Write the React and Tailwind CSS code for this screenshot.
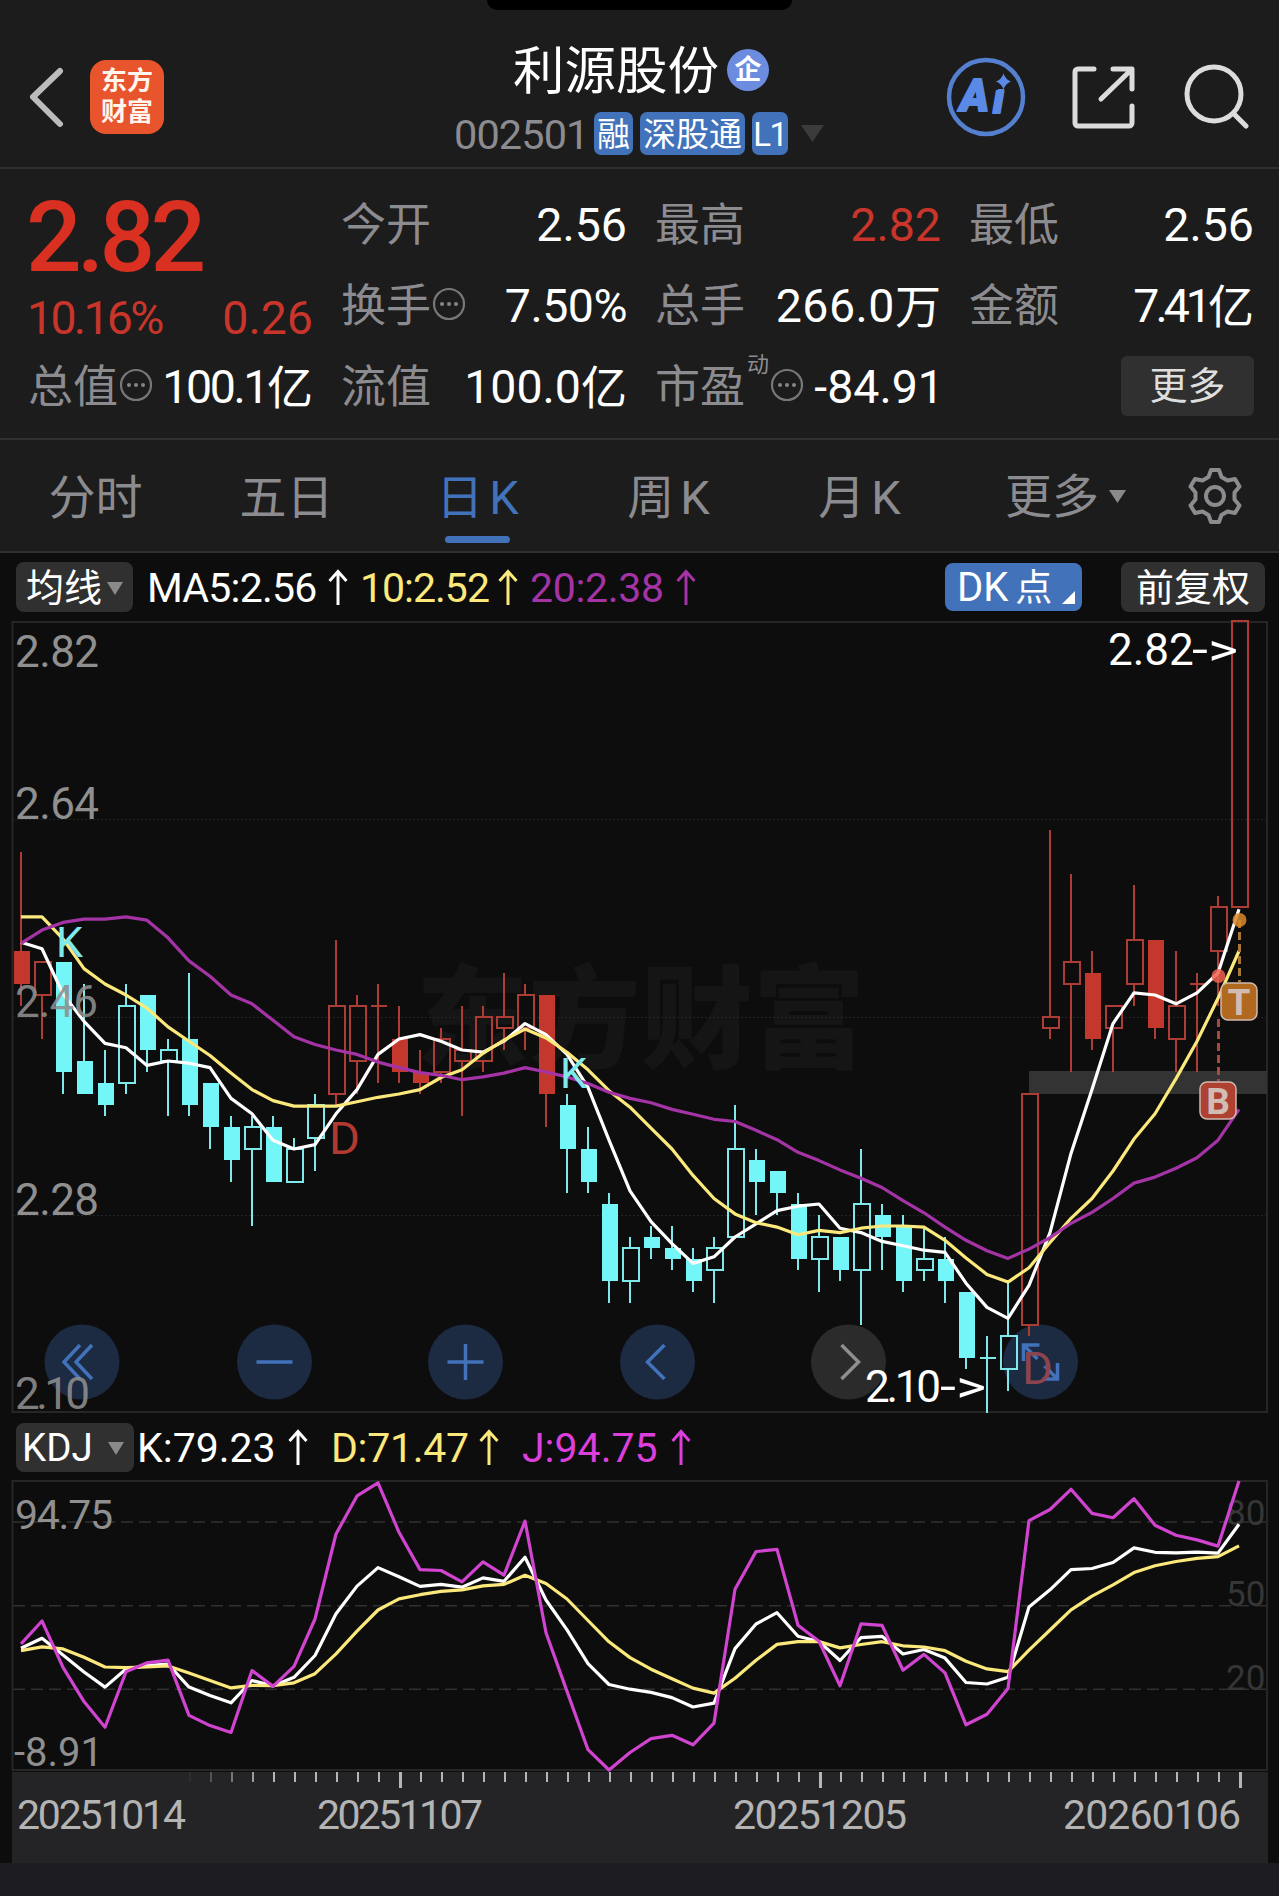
import React from 'react';

// prices in cents: [style, high, bodyTop, bodyBottom, low]
// style: r/c = red/cyan, f/h/d = filled/hollow/doji
const CANDLES = [
  ['rf', 261, 252, 249, 247], ['rh', 251, 251, 248, 244], ['cf', 251, 251, 241, 239], ['cf', 249, 242, 239, 239],
  ['cf', 243, 240, 238, 237], ['ch', 249, 247, 240, 239], ['cf', 248, 248, 243, 241], ['ch', 244, 243, 242, 237],
  ['cf', 250, 244, 238, 237], ['cf', 240, 240, 236, 234], ['cf', 237, 236, 233, 231], ['ch', 237, 236, 234, 227],
  ['cf', 237, 236, 231, 231], ['ch', 235, 234, 231, 231], ['ch', 239, 238, 235, 232], ['rh', 253, 247, 239, 238],
  ['rh', 248, 247, 242, 239], ['rd', 249, 247, 247, 240], ['rf', 247, 244, 241, 240], ['rf', 243, 241, 240, 239],
  ['rh', 245, 244, 241, 240], ['rh', 247, 243, 242, 237], ['rh', 247, 246, 242, 241], ['rh', 250, 246, 245, 243],
  ['rh', 249, 248, 245, 243], ['rf', 248, 248, 239, 236], ['cf', 239, 238, 234, 230], ['cf', 236, 234, 231, 230],
  ['cf', 230, 229, 222, 220], ['ch', 226, 225, 222, 220], ['cf', 227, 226, 225, 224], ['cf', 227, 225, 224, 223],
  ['cf', 225, 224, 222, 221], ['ch', 226, 225, 223, 220], ['ch', 238, 234, 226, 226], ['cf', 234, 233, 231, 228],
  ['cf', 232, 232, 230, 228], ['cf', 230, 229, 224, 223], ['ch', 228, 226, 224, 221], ['cf', 226, 226, 223, 222],
  ['ch', 234, 229, 223, 218], ['cf', 229, 228, 226, 223], ['cf', 228, 227, 222, 221], ['ch', 227, 224, 223, 222],
  ['cf', 226, 224, 222, 220], ['cf', 221, 221, 215, 214], ['cd', 217, 215, 215, 210], ['ch', 222, 217, 214, 212],
  ['rh', 239, 239, 218, 217], ['rh', 263, 246, 245, 244], ['rh', 259, 251, 249, 241], ['rf', 252, 250, 244, 243],
  ['rh', 247, 247, 245, 241], ['rh', 258, 253, 249, 247], ['rf', 253, 253, 245, 244], ['rh', 252, 247, 244, 241],
  ['rd', 250, 249, 249, 241], ['rh', 257, 256, 252, 247], ['rh', 282, 282, 256, 256],
];

const closes = CANDLES.map(([s, , top, bottom]) => (s[1] === 'f' ? bottom : top));

// the first values of each line depend on days left of the visible window
const MA5_HEAD = [252.8, 252.2, 248.1, 245.6];
const MA10_HEAD = [255.1, 255.1, 253.1, 250.4, 249, 248, 246.8, 245.1, 243.8];
const MA20_HEAD = [252.7, 253.9, 254.6, 254.9, 254.9, 255.1, 254.8, 253.2, 251.1, 249.7, 248, 247.2, 245.7, 244.2, 243.5, 243, 242.6, 241.9, 241.4];
const K_HEAD = [34.7, 38.3, 32.3, 26.2, 20.8, 27.3, 28.5, 29.1];
const D_HEAD = [33.9, 35.2, 34.5, 31.5, 28, 27.8, 28, 28.4];

function movingAverage(n, head) {
  return closes.map((_, i) => (i < head.length ? head[i] : closes.slice(i - n + 1, i + 1).reduce((a, b) => a + b, 0) / n));
}

function kdj() {
  const k = [...K_HEAD];
  const d = [...D_HEAD];
  for (let i = k.length; i < CANDLES.length; i++) {
    const win = CANDLES.slice(i - 8, i + 1);
    const hi = Math.max(...win.map((c) => c[1]));
    const lo = Math.min(...win.map((c) => c[4]));
    const rsv = ((closes[i] - lo) / (hi - lo)) * 100;
    k.push((k[i - 1] * 2 + rsv) / 3);
    d.push((d[i - 1] * 2 + k[i]) / 3);
  }
  return { k, d, j: k.map((v, i) => 3 * v - 2 * d[i]) };
}

const px = (i) => 21 + i * 21;
const py = (c) => 396 + (246 - c) * 11;
const ky = (v) => 41 + (80 - v) * 2.789;
const line = (values, y) => values.map((v, i) => `${px(i)},${y(v).toFixed(1)}`).join(' ');

const RED = '#c4372c';
const RED_LINE = '#ab3d35';
const CYAN = '#74f5f7';
const CYAN_LINE = '#7fe8ea';

function Candle({ data, i }) {
  const [style, high, top, bottom, low] = data;
  const red = style[0] === 'r';
  const stroke = red ? RED_LINE : CYAN_LINE;
  const x = px(i);
  if (style[1] === 'd') {
    return (
      <g fill={stroke}>
        <rect x={x - 1} y={py(high)} width="2" height={py(low) - py(high)} />
        <rect x={x - 7} y={py(top) - 1} width="16" height="2" />
      </g>
    );
  }
  return (
    <g>
      <rect x={x - 1} y={py(high)} width="2" height={py(top) - py(high)} fill={stroke} />
      <rect x={x - 1} y={py(bottom)} width="2" height={py(low) - py(bottom)} fill={stroke} />
      {style[1] === 'f'
        ? <rect x={x - 7} y={py(top)} width="16" height={py(bottom) - py(top)} fill={red ? RED : CYAN} />
        : <rect x={x - 7} y={py(top)} width="16" height={py(bottom) - py(top)} fill="none" stroke={stroke} strokeWidth="2" />}
    </g>
  );
}

function Down({ w = 16, h = 13, color = '#8a8a8a' }) {
  return <svg width={w} height={h} viewBox="0 0 16 13" preserveAspectRatio="none"><path d="M0 0h16L8 13z" fill={color} /></svg>;
}

function Up({ className = '' }) {
  return (
    <svg width="20" height="36" viewBox="0 0 20 36" fill="none" stroke="currentColor" strokeWidth="3" className={`shrink-0 ${className}`}>
      <path d="M10 36V3M1.500 12 10 2.500l8.500 9.500" />
    </svg>
  );
}

function Info({ className = '' }) {
  return (
    <svg width="34" height="34" viewBox="0 0 34 34" className={`shrink-0 ${className}`}>
      <circle cx="17" cy="17" r="15" fill="none" stroke="#77777a" strokeWidth="2.200" />
      <g fill="#85858a"><circle cx="10" cy="17" r="2" /><circle cx="17" cy="17" r="2" /><circle cx="24" cy="17" r="2" /></g>
    </svg>
  );
}

function Stat({ label, value, unit, info, sup, className = 'text-white' }) {
  return (
    <div className="flex h-[81px] items-center whitespace-nowrap pt-[2px]">
      <span className="text-[45px] text-[#8c8c90]">{label}</span>
      {sup && <span className="mb-[46px] ml-[2px] text-[22px] text-[#8c8c90]">{sup}</span>}
      {info && <Info className="mb-[6px] ml-px" />}
      <span className={`ml-auto text-[46.500px] ${className}`}>{value}</span>
      {unit && <span className="text-[46px] text-white">{unit}</span>}
    </div>
  );
}

function Header() {
  return (
    <header className="relative flex h-[169px] justify-between border-b-2 border-[#303030]">
      <div className="absolute left-[487px] top-0 h-[10px] w-[305px] rounded-b-[32px] bg-black" />
      <div className="mt-[60px] flex h-[74px] items-center pl-[29px]">
        <svg width="35" height="62" viewBox="0 0 35 62" fill="none" stroke="#bcbcbc" strokeWidth="6" strokeLinecap="round" strokeLinejoin="round">
          <path d="M31 5 4 31l27 27" />
        </svg>
        <div className="ml-[26px] flex h-[74px] w-[74px] flex-col items-center justify-center rounded-[16px] bg-[#e8552c] pb-px text-[26px] font-bold leading-[31px] text-[#fff6ee]">
          <span>东方</span>
          <span>财富</span>
        </div>
      </div>
      <div className="absolute left-[454px] top-[38px] flex w-[372px] flex-col">
        <div className="flex h-[64px] items-center pl-[59px]">
          <h1 className="pt-[4px] text-[51.500px] leading-none text-white">利源股份</h1>
          <span className="ml-[8px] flex h-[42px] w-[42px] items-center justify-center rounded-full bg-[#6c8ce0] text-[27px] font-bold leading-none text-white">企</span>
        </div>
        <div className="mt-[10px] flex h-[43px] items-center whitespace-nowrap text-[33px] leading-none text-white">
          <span className="w-[140px] pt-[3px] text-[41.500px] tracking-[-0.900px] text-[#8c8c90]">002501</span>
          <span className="flex h-[43px] w-[39px] items-center justify-center rounded-[7px] bg-[#4172ba] pt-[2px]">融</span>
          <span className="ml-[7px] flex h-[43px] w-[105px] items-center justify-center rounded-[7px] bg-[#4172ba] pt-[2px]">深股通</span>
          <span className="ml-[7px] flex h-[43px] w-[36px] items-center justify-center rounded-[7px] bg-[#4172ba] pt-[2px] tracking-[-1.500px]">L1</span>
          <span className="ml-[13px]"><Down w={23} h={17} color="#3b3b3b" /></span>
        </div>
      </div>
      <div className="mt-[56px] flex h-[82px] items-center pr-[30px]">
        <svg width="82" height="82" viewBox="0 0 82 82">
          <text y="55" fontSize="44" fontWeight="900" fontStyle="italic" fill="#5b8ae6" stroke="#5b8ae6" strokeWidth="2" strokeLinejoin="round">
            <tspan x="15">A</tspan><tspan x="48" y="57" fontSize="41">i</tspan>
          </text>
          <path d="M48 14h18v19H48z" fill="#1c1c1c" />
          <path d="M58.500 17.500q2 6 7.500 8-5.500 2-7.500 8-2-6-7.500-8 5.500-2 7.500-8z" fill="#5b8ae6" />
          <circle cx="41" cy="41" r="37" fill="none" stroke="#5480cf" strokeWidth="4.500" />
        </svg>
        <svg width="64" height="64" viewBox="0 0 64 64" fill="none" stroke="#dcdcdc" strokeWidth="5" strokeLinecap="round" strokeLinejoin="round" className="ml-[45px]">
          <path d="M22 4H6a3 3 0 0 0-3 3v51a3 3 0 0 0 3 3h51a3 3 0 0 0 3-3V41M41 4h19v20M59 5 29 34" />
        </svg>
        <svg width="66" height="66" viewBox="0 0 66 66" fill="none" stroke="#dcdcdc" strokeWidth="5" strokeLinecap="round" className="ml-[47px]">
          <circle cx="31" cy="30" r="27" />
          <path d="m51 50 12 12" />
        </svg>
      </div>
    </header>
  );
}

function Quote() {
  return (
    <section className="grid h-[271px] grid-cols-[285px_286px_286px_285px] gap-x-7 border-b-2 border-[#303030] pl-7 pt-[15px] leading-none">
      <div>
        <div className="-ml-[2px] flex h-[104px] items-center pt-[4px] text-[98px] font-medium tracking-[-4.700px] text-[#d93022]">2.82</div>
        <div className="flex h-[58px] items-center justify-between pt-[3px] text-[46.500px] text-[#c9352a]">
          <span className="-ml-px tracking-[-2.700px]">10.16%</span>
          <span>0.26</span>
        </div>
        <Stat label="总值" value="100.1" unit="亿" info className="tracking-[-2.400px] text-white" />
      </div>
      <div>
        <Stat label="今开" value="2.56" />
        <Stat label="换手" value="7.50%" info className="tracking-[-0.500px] text-white" />
        <Stat label="流值" value="100.0" unit="亿" />
      </div>
      <div>
        <Stat label="最高" value="2.82" className="text-[#c9352a]" />
        <Stat label="总手" value="266.0" unit="万" className="tracking-[0.500px] text-white" />
        <Stat label="市盈" value="-84.91" sup="动" info className="-mr-[3px] text-white" />
      </div>
      <div>
        <Stat label="最低" value="2.56" />
        <Stat label="金额" value="7.41" unit="亿" className="tracking-[-4px] text-white" />
        <div className="flex h-[81px] items-center justify-end">
          <button className="mb-[2px] h-[60px] w-[133px] rounded-md bg-[#303030] text-[38px] leading-none text-[#dedede]">更多</button>
        </div>
      </div>
    </section>
  );
}

const TABS = ['分时', '五日', '日K', '周K', '月K'];

function Tabs() {
  return (
    <nav className="flex h-[113px] items-center border-b-2 border-[#303030] text-[47px] leading-none text-[#8c8c90]">
      {TABS.map((tab) => (
        <div key={tab} className={`relative flex h-full w-[191px] items-center justify-center gap-[6px] pt-[3px] ${tab === '日K' ? 'text-[#4172ba]' : ''}`}>
          {tab.endsWith('K') ? <><span>{tab[0]}</span><span>K</span></> : tab}
          {tab === '日K' && <span className="absolute bottom-[8px] left-[63px] h-[7px] w-[65px] rounded-full bg-[#4172ba]" />}
        </div>
      ))}
      <div className="ml-[50px] flex items-center gap-[10px] pt-[2px]">更多<Down w={17} h={13} /></div>
      <svg width="58" height="58" viewBox="0 0 58 58" fill="none" stroke="#8c8c90" strokeWidth="4" strokeLinejoin="round" className="ml-[60px]">
        <path d="M25 3h8l2.500 7 6 3.500 7.500-1.500 4.500 7.500-5 6v7l5 6-4.500 7.500-7.500-1.500-6 3.500-2.500 7h-8l-2.500-7-6-3.500-7.500 1.500-4.500-7.500 5-6v-7l-5-6L9 12l7.500 1.500 6-3.500z" />
        <circle cx="29" cy="29" r="9" />
      </svg>
    </nav>
  );
}

function MaBar() {
  return (
    <div className="flex h-[68px] items-center whitespace-nowrap pl-4 pr-[14px] text-[41px] leading-none text-white">
      <button className="flex h-[50px] w-[117px] items-center justify-center gap-[5px] rounded-lg bg-[#303030] pt-[2px] text-[38px] leading-none">均线<Down /></button>
      <span className="ml-[14px] w-[181px] pt-[2px] tracking-[-0.800px]">MA5:2.56</span><Up />
      <span className="ml-[12px] w-[138px] pt-[2px] tracking-[-1px] text-[#fbe97c]">10:2.52</span><Up className="text-[#fbe97c]" />
      <span className="ml-[12px] w-[146px] pt-[2px] tracking-[-0.300px] text-[#a434a6]">20:2.38</span><Up className="text-[#a434a6]" />
      <button className="relative ml-auto flex h-[48px] w-[137px] items-center gap-[7px] rounded-lg bg-[#4172ba] pl-[12px] pt-[2px] text-[40px] leading-none">
        <span>DK</span><span className="text-[37px]">点</span>
        <svg width="13" height="13" className="absolute bottom-[7px] right-[7px]"><path d="M13 0v13H0z" fill="#fff" /></svg>
      </button>
      <button className="ml-[39px] h-[50px] w-[144px] rounded-lg bg-[#303030] pt-[2px] text-[38px] leading-none">前复权</button>
    </div>
  );
}

const CONTROLS = [
  { x: 82, d: 'M-2-17-18 0l16 17M10-17-6 0l16 17' },
  { x: 274.5, d: 'M-18 0h36' },
  { x: 465.5, d: 'M-18 0h36M0-18v36' },
  { x: 657.5, d: 'M7-17-10 0 7 17' },
  { x: 848.5, d: 'M-7-17 10 0-7 17', off: true },
  { x: 1040.5, d: 'M-3-3-16-16M-17-1v-16h16M4 4 17 17M17 1v16H2' },
];

function KChart() {
  return (
    <svg width="1279" height="792" viewBox="0 0 1279 792" className="block overflow-visible">
      <text x="416" y="439" fontSize="112" fontWeight="900" fill="#151515" textLength="449">东方财富</text>
      <g stroke="#242424" strokeDasharray="2 2">
        <path d="M13 198.500H1266M13 396.500H1266M13 594.500H1266" />
      </g>
      <path d="M12.500 1V791H1267V1z" fill="none" stroke="#262626" strokeWidth="2" />
      <rect x="1029" y="450" width="238" height="23" fill="#333" />
      {CONTROLS.map((c) => (
        <g key={c.x} transform={`translate(${c.x} 741)`}>
          <circle r="37.500" fill={c.off ? '#2b2b2b' : '#1c2a42'} />
          <path d={c.d} fill="none" stroke={c.off ? '#8f8f8f' : '#4172ba'} strokeWidth="3.500" />
        </g>
      ))}
      <text x="1022" y="763" fontSize="44" fill="#8c4450" textLength="31" lengthAdjust="spacingAndGlyphs">D</text>
      {CANDLES.map((c, i) => <Candle key={i} data={c} i={i} />)}
      <g fill="none" strokeWidth="3.200" strokeLinejoin="round">
        <polyline points={line(movingAverage(5, MA5_HEAD), py)} stroke="#fff" />
        <polyline points={line(movingAverage(10, MA10_HEAD), py)} stroke="#fbe97c" />
        <polyline points={line(movingAverage(20, MA20_HEAD), py)} stroke="#a434a6" />
      </g>
      <g fontSize="43">
        <text x="56" y="336" fill={CYAN_LINE}>K</text>
        <text x="560" y="467" fill={CYAN_LINE}>K</text>
        <text x="329" y="533" fontSize="44" fill="#b03a30" textLength="31" lengthAdjust="spacingAndGlyphs">D</text>
      </g>
      <g fontSize="44" fill="#fff">
        <text x="1108" y="44">2.82</text>
        <text x="1192" y="44" textLength="46" lengthAdjust="spacingAndGlyphs">-&gt;</text>
        <text x="865" y="781" textLength="76">2.10</text>
        <text x="940" y="781" textLength="46" lengthAdjust="spacingAndGlyphs">-&gt;</text>
      </g>
      <g fontSize="44" fill="#8f8f8f">
        <text x="15" y="46" textLength="84">2.82</text>
        <text x="15" y="198" textLength="84">2.64</text>
        <text x="15" y="396" textLength="83" fillOpacity="0.9">2.46</text>
        <text x="15" y="594" textLength="84">2.28</text>
        <text x="15" y="788" textLength="75" fillOpacity="0.9">2.10</text>
      </g>
      <g strokeWidth="3" strokeDasharray="8 4">
        <path d="M1239.500 299v62" stroke="#a87838" />
        <path d="M1218.500 398v62" stroke="#a8493c" />
      </g>
      <circle cx="1239.500" cy="299" r="7" fill="#d98a2b" fillOpacity="0.85" />
      <circle cx="1218.500" cy="355" r="7" fill="#f0604f" fillOpacity="0.85" />
      <g fontSize="37" fontWeight="700" textAnchor="middle" fill="#d2bdb5" stroke="#cfb9b0" strokeWidth="1.500">
        <rect x="1221" y="362" width="36" height="37" rx="7" fill="#b0691f" />
        <text x="1239" y="394" stroke="none">T</text>
        <rect x="1200" y="461" width="36" height="37" rx="7" fill="#ae4132" />
        <text x="1218" y="493" stroke="none">B</text>
      </g>
    </svg>
  );
}

function KdjBar() {
  return (
    <div className="flex h-[68px] items-center whitespace-nowrap pl-4 text-[41px] leading-none text-white">
      <button className="flex h-[49px] w-[118px] items-center gap-[17px] rounded-lg bg-[#303030] pl-[6px] pt-[2px] text-[38.500px] leading-none"><span className="w-[69px] text-left">KDJ</span><Down /></button>
      <span className="ml-[3px] w-[151px] pt-[2px]">K:79.23</span><Up />
      <span className="ml-[23px] w-[148px] pt-[2px] tracking-[-0.300px] text-[#fbe97c]">D:71.47</span><Up className="text-[#fbe97c]" />
      <span className="ml-[23px] w-[149px] pt-[2px] text-[#dc3fdc]">J:94.75</span><Up className="text-[#dc3fdc]" />
    </div>
  );
}

const DATES = [
  { x: 17, w: 169, text: '20251014' },
  { x: 317, w: 166, text: '20251107' },
  { x: 733, w: 174, text: '20251205' },
  { x: 1063, w: 178, text: '20260106' },
];

function KdjChart() {
  const { k, d, j } = kdj();
  return (
    <svg width="1279" height="382" viewBox="0 0 1279 382" className="block overflow-visible">
      <g stroke="#303030" strokeWidth="1.500" strokeDasharray="12 6">
        <path d="M13 41H1266M13 124.700H1266M13 208.300H1266" />
      </g>
      <path d="M12.500 0V289H1267V0z" fill="none" stroke="#262626" strokeWidth="2" />
      <g fontSize="35" fill="#363636">
        <text x="1226" y="44">80</text>
        <text x="1226" y="125">50</text>
        <text x="1226" y="209">20</text>
      </g>
      <g fontSize="41" fill="#8f8f8f">
        <text x="15" y="48" textLength="98">94.75</text>
        <text x="14" y="285" textLength="89" lengthAdjust="spacingAndGlyphs">-8.91</text>
      </g>
      <g fill="none" strokeWidth="3.200" strokeLinejoin="round">
        <polyline points={line(k, ky)} stroke="#fff" />
        <polyline points={line(d, ky)} stroke="#fbe97c" />
        <polyline points={line(j, ky)} stroke="#d044d0" />
      </g>
      <rect x="12" y="291" width="1256" height="91" fill="#242426" />
      {CANDLES.map((_, i) => {
        if (i < 8) return null;
        const major = (58 - i) % 20 === 0;
        return <rect key={i} x={px(i)} y="291" width={major ? 3 : 2} height={major ? 16 : 10} fill="#b5b5b5" fillOpacity={Math.min(1, (i - 7.7) * 0.25)} />;
      })}
      <g fontSize="41" fill="#b4b4b4">
        {DATES.map((t) => <text key={t.text} x={t.x} y="348" textLength={t.w}>{t.text}</text>)}
      </g>
    </svg>
  );
}

export default function App() {
  return (
    <div className="flex h-[1896px] w-[1279px] flex-col overflow-hidden bg-[#0d0d0d] font-['Roboto','Noto_Sans_CJK_SC',sans-serif]">
      <div className="bg-[#1c1c1c]">
        <Header />
        <Quote />
        <Tabs />
      </div>
      <MaBar />
      <KChart />
      <KdjBar />
      <KdjChart />
      <div className="grow bg-[#1d1c21]" />
    </div>
  );
}
